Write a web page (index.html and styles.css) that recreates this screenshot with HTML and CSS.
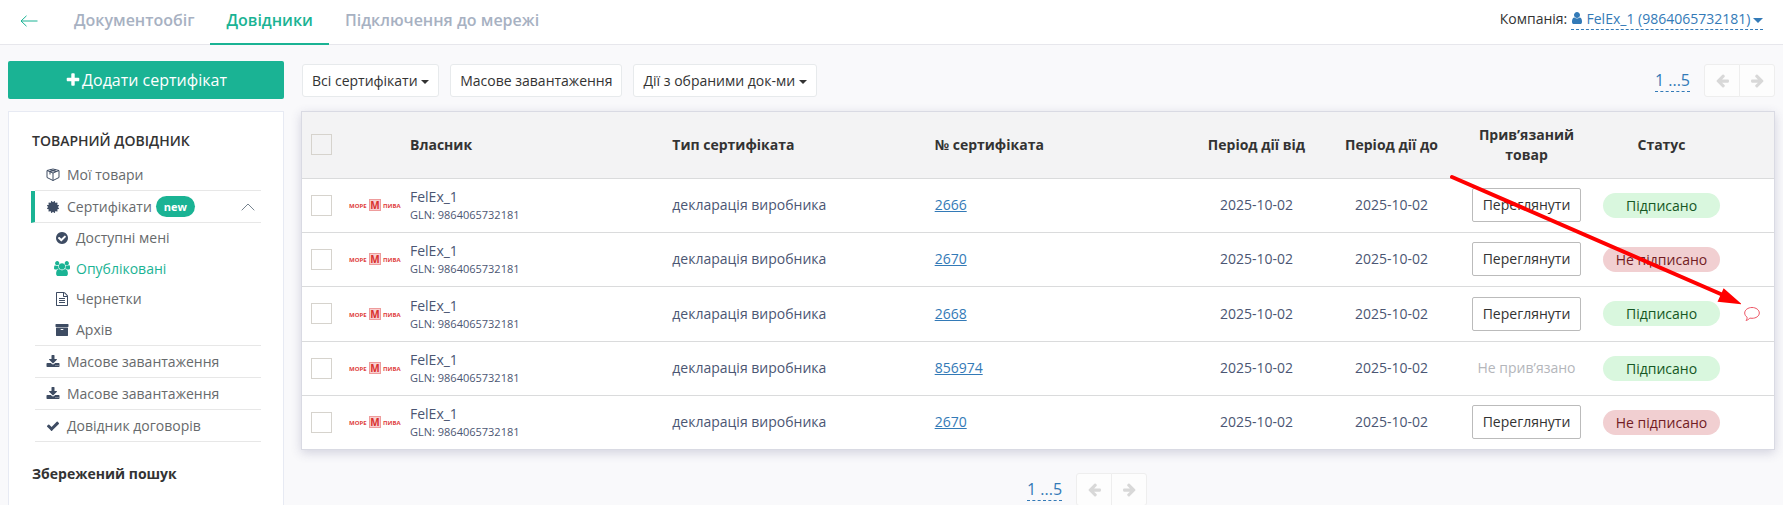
FILE: index.html
```html
<!DOCTYPE html>
<html lang="uk">
<head>
<meta charset="utf-8">
<title>Довідники — сертифікати</title>
<link rel="stylesheet" href="styles.css">
</head>
<body>
<svg class="sprite" aria-hidden="true">
  <symbol id="i-plus" viewBox="0 0 1792 1792"><path d="M1600 736v192q0 40-28 68t-68 28h-416v416q0 40-28 68t-68 28h-192q-40 0-68-28t-28-68v-416h-416q-40 0-68-28t-28-68v-192q0-40 28-68t68-28h416v-416q0-40 28-68t68-28h192q40 0 68 28t28 68v416h416q40 0 68 28t28 68z"/></symbol>
  <symbol id="i-certificate" viewBox="0 0 1792 1792"><path d="M1504 896l138 135q30 28 20 70-12 41-52 51l-188 48 53 186q12 41-19 70-29 31-70 19l-186-53-48 188q-10 40-51 52-12 2-19 2-31 0-51-22l-135-138-135 138q-28 30-70 20-41-11-51-52l-48-188-186 53q-41 12-70-19-31-29-19-70l53-186-188-48q-40-10-52-51-10-42 20-70l138-135-138-135q-30-28-20-70 12-41 52-51l188-48-53-186q-12-41 19-70 29-31 70-19l186 53 48-188q10-41 51-51 41-12 70 19l135 139 135-139q29-30 70-19 41 10 51 51l48 188 186-53q41-12 70 19 31 29 19 70l-53 186 188 48q40 10 52 51 10 42-20 70z"/></symbol>
  <symbol id="i-check-circle" viewBox="0 0 1792 1792"><path d="M1412 734q0-28-18-46l-91-90q-19-19-45-19t-45 19l-408 407-226-226q-19-19-45-19t-45 19l-91 90q-18 18-18 46 0 27 18 45l362 362q19 19 45 19 27 0 46-19l543-543q18-18 18-45zm252 162q0 209-103 385.5t-279.5 279.5-385.5 103-385.5-103-279.5-279.5-103-385.5 103-385.5 279.5-279.5 385.5-103 385.5 103 279.5 279.5 103 385.5z"/></symbol>
  <symbol id="i-group" viewBox="-64 0 1920 1792"><path d="M529 896q-162 5-265 128h-134q-82 0-138-40.500t-56-118.500q0-353 124-353 6 0 43.500 21t97.500 42.500 119 21.500q67 0 133-23-5 37-5 66 0 159 90 287zm1071 637q0 120-73 189.500t-194 69.500h-874q-121 0-194-69.500t-73-189.500q0-53 3.500-103.500t14-109 26.500-108.500 43-97.500 62-81 85.500-53.500 111.500-20q10 0 43 21.500t73 48 107 48 135 21.500 135-21.500 107-48 73-48 43-21.500q61 0 111.500 20t85.500 53.500 62 81 43 97.500 26.500 108.500 14 109 3.500 103.500zm-1024-1277q0 106-75 181t-181 75-181-75-75-181 75-181 181-75 181 75 75 181zm704 384q0 159-112.500 271.500t-271.500 112.500-271.500-112.500-112.500-271.500 112.500-271.500 271.500-112.500 271.500 112.500 112.500 271.500zm576 225q0 78-56 118.500t-138 40.500h-134q-103-123-265-128 90-128 90-287 0-29-5-66 66 23 133 23 59 0 119-21.500t97.500-42.500 43.500-21q124 0 124 353zm-128-609q0 106-75 181t-181 75-181-75-75-181 75-181 181-75 181 75 75 181z"/></symbol>
  <symbol id="i-user" viewBox="128 0 1536 1792"><path d="M1536 1399q0 109-62.500 187t-150.500 78h-854q-88 0-150.500-78t-62.500-187q0-85 8.500-160.500t31.500-152 58.500-131 94-89 134.500-34.500q131 128 313 128t313-128q76 0 134.500 34.500t94 89 58.500 131 31.500 152 8.500 160.500zm-256-887q0 159-112.500 271.500t-271.500 112.500-271.500-112.500-112.500-271.500 112.500-271.500 271.500-112.500 271.500 112.500 112.500 271.500z"/></symbol>
  <symbol id="i-download" viewBox="0 0 1792 1792"><path d="M1344 1344q0-26-19-45t-45-19-45 19-19 45 19 45 45 19 45-19 19-45zm256 0q0-26-19-45t-45-19-45 19-19 45 19 45 45 19 45-19 19-45zm128-224v320q0 40-28 68t-68 28h-1472q-40 0-68-28t-28-68v-320q0-40 28-68t68-28h465l135 136q58 56 136 56t136-56l136-136h464q40 0 68 28t28 68zm-325-569q17 41-14 70l-448 448q-18 19-45 19t-45-19l-448-448q-31-29-14-70 17-39 59-39h256v-448q0-26 19-45t45-19h256q26 0 45 19t19 45v448h256q42 0 59 39z"/></symbol>
  <symbol id="i-check" viewBox="0 0 1792 1792"><path d="M1671 566q0 40-28 68l-724 724-136 136q-28 28-68 28t-68-28l-136-136-362-362q-28-28-28-68t28-68l136-136q28-28 68-28t68 28l294 295 656-657q28-28 68-28t68 28l136 136q28 28 28 68z"/></symbol>
  <symbol id="i-archive" viewBox="0 0 1792 1792"><path d="M1088 832q0-26-19-45t-45-19h-256q-26 0-45 19t-19 45 19 45 45 19h256q26 0 45-19t19-45zm576-192v960q0 26-19 45t-45 19h-1408q-26 0-45-19t-19-45v-960q0-26 19-45t45-19h1408q26 0 45 19t19 45zm64-448v256q0 26-19 45t-45 19h-1536q-26 0-45-19t-19-45v-256q0-26 19-45t45-19h1536q26 0 45 19t19 45z"/></symbol>
  <symbol id="i-file" viewBox="0 0 1792 1792"><path d="M1596 380q28 28 48 76t20 88v1152q0 40-28 68t-68 28h-1344q-40 0-68-28t-28-68v-1600q0-40 28-68t68-28h896q40 0 88 20t76 48zm-444-244v376h376q-10-29-22-41l-313-313q-12-12-41-22zm384 1528v-1024h-416q-40 0-68-28t-28-68v-416h-768v1536h1280zm-1024-864q0-14 9-23t23-9h704q14 0 23 9t9 23v64q0 14-9 23t-23 9h-704q-14 0-23-9t-9-23v-64zm736 224q14 0 23 9t9 23v64q0 14-9 23t-23 9h-704q-14 0-23-9t-9-23v-64q0-14 9-23t23-9h704zm0 256q14 0 23 9t9 23v64q0 14-9 23t-23 9h-704q-14 0-23-9t-9-23v-64q0-14 9-23t23-9h704z"/></symbol>
  <symbol id="i-left" viewBox="0 0 1792 1792"><path d="M1664 896v128q0 53-32.500 90.500t-84.500 37.500h-704l293 294q38 36 38 90t-38 90l-75 76q-37 37-90 37-52 0-91-37l-651-652q-37-37-37-90 0-52 37-91l651-650q38-38 91-38 52 0 90 38l75 74q38 38 38 91t-38 91l-293 293h704q52 0 84.500 37.500t32.500 90.500z"/></symbol>
  <symbol id="i-right" viewBox="0 0 1792 1792"><use href="#i-left" width="1792" height="1792" transform="translate(1792 0) scale(-1 1)"/></symbol>
  <symbol id="i-box" viewBox="0 0 14 14"><path fill="none" stroke="currentColor" stroke-width="1" stroke-linejoin="round" d="M1 2.500L7 1L13 2.500V9.500L7 12.500L1 9.500ZM1 2.500L7 5L13 2.500M7 5V12.500M4 1.800L10 3.700M10 1.800L4 3.700V6.500"/></symbol>
  <symbol id="i-bubble" viewBox="0 0 16 16"><path fill="none" stroke="currentColor" stroke-width="1" stroke-linejoin="round" d="M8 1.500C12 1.500 15.300 3.900 15.300 7S12 12.300 8 12.300C7.200 12.300 6.500 12.200 5.800 12.100C4.900 13.200 3.600 14.200 2 14.400C2.900 13.400 3.200 12.300 3.100 11.200C1.600 10.200 .7 8.700 .7 7C.7 3.900 4 1.500 8 1.500Z"/></symbol>
  <symbol id="i-logo" viewBox="0 0 52 12">
    <rect x="20.500" y=".5" width="11" height="11" fill="#f9cfcf" stroke="#ee9c9c"/>
    <text class="logo-side" x="0" y="8.500">МОРЕ</text>
    <text class="logo-mid" x="26" y="10">М</text>
    <text class="logo-side" x="34" y="8.500">ПИВА</text>
  </symbol>
</svg>

<header class="topbar">
  <a class="back" href="#" aria-label="Назад"><svg viewBox="0 0 18 12"><path d="M6.500 .8L1 6L6.500 11.200M1 6H17.500"/></svg></a>
  <nav class="tabs">
    <a href="#">Документообіг</a>
    <a href="#" class="active">Довідники</a>
    <a href="#">Підключення до мережі</a>
  </nav>
  <div class="company">Компанія: <a href="#"><svg class="user"><use href="#i-user"/></svg> FelEx_1 (9864065732181) <span class="caret"></span></a></div>
</header>

<div class="layout">
  <aside class="side">
    <button class="add" type="button"><svg class="icon"><use href="#i-plus"/></svg>Додати сертифікат</button>
    <div class="panel">
      <h2>ТОВАРНИЙ ДОВІДНИК</h2>
      <ul class="menu">
        <li><a href="#"><svg class="icon"><use href="#i-box"/></svg>Мої товари</a></li>
        <li class="open"><a href="#"><svg class="icon"><use href="#i-certificate"/></svg>Сертифікати<span class="new">new</span><svg class="chevron" viewBox="0 0 14 8"><path d="M.7 7.300L7 1L13.300 7.300"/></svg></a></li>
        <li class="sub">
          <ul>
            <li><a href="#"><svg class="icon"><use href="#i-check-circle"/></svg>Доступні мені</a></li>
            <li><a href="#" class="current"><svg class="icon"><use href="#i-group"/></svg>Опубліковані</a></li>
            <li><a href="#"><svg class="icon"><use href="#i-file"/></svg>Чернетки</a></li>
            <li><a href="#"><svg class="icon"><use href="#i-archive"/></svg>Архів</a></li>
          </ul>
        </li>
        <li><a href="#"><svg class="icon"><use href="#i-download"/></svg>Масове завантаження</a></li>
        <li><a href="#"><svg class="icon"><use href="#i-download"/></svg>Масове завантаження</a></li>
        <li><a href="#"><svg class="icon"><use href="#i-check"/></svg>Довідник договорів</a></li>
      </ul>
      <h3>Збережений пошук</h3>
    </div>
  </aside>

  <main class="main">
    <div class="toolbar">
      <button type="button" class="btn">Всі сертифікати <span class="caret"></span></button>
      <button type="button" class="btn">Масове завантаження</button>
      <button type="button" class="btn">Дії з обраними док-ми <span class="caret"></span></button>
      <div class="pager end">
        <a href="#">1 ...5</a>
        <div class="group"><button type="button" disabled aria-label="Попередня"><svg class="icon"><use href="#i-left"/></svg></button><button type="button" disabled aria-label="Наступна"><svg class="icon"><use href="#i-right"/></svg></button></div>
      </div>
    </div>

    <div class="card">
      <table>
        <colgroup><col class="c-check"><col class="c-logo"><col><col><col><col class="c-mid"><col class="c-mid"><col class="c-mid"><col class="c-mid"><col class="c-note"></colgroup>
        <thead>
          <tr><th class="tick"><input type="checkbox" aria-label="Обрати всі"></th><th></th><th>Власник</th><th>Тип сертифіката</th><th>№ сертифіката</th><th class="mid">Період дії від</th><th class="mid">Період дії до</th><th class="mid">Прив’язаний товар</th><th class="mid">Статус</th><th></th></tr>
        </thead>
        <tbody>
          <tr><td class="tick"><input type="checkbox" aria-label="Обрати 2666"></td><td class="tick"><svg class="logo"><use href="#i-logo"/></svg></td><td>FelEx_1<small>GLN: 9864065732181</small></td><td>декларація виробника</td><td><a href="#">2666</a></td><td class="mid">2025-10-02</td><td class="mid">2025-10-02</td><td class="mid"><button type="button" class="view">Переглянути</button></td><td class="mid"><span class="pill ok">Підписано</span></td><td></td></tr>
          <tr><td class="tick"><input type="checkbox" aria-label="Обрати 2670"></td><td class="tick"><svg class="logo"><use href="#i-logo"/></svg></td><td>FelEx_1<small>GLN: 9864065732181</small></td><td>декларація виробника</td><td><a href="#">2670</a></td><td class="mid">2025-10-02</td><td class="mid">2025-10-02</td><td class="mid"><button type="button" class="view">Переглянути</button></td><td class="mid"><span class="pill no">Не підписано</span></td><td></td></tr>
          <tr><td class="tick"><input type="checkbox" aria-label="Обрати 2668"></td><td class="tick"><svg class="logo"><use href="#i-logo"/></svg></td><td>FelEx_1<small>GLN: 9864065732181</small></td><td>декларація виробника</td><td><a href="#">2668</a></td><td class="mid">2025-10-02</td><td class="mid">2025-10-02</td><td class="mid"><button type="button" class="view">Переглянути</button></td><td class="mid"><span class="pill ok">Підписано</span></td><td class="mid"><svg class="bubble"><use href="#i-bubble"/></svg></td></tr>
          <tr><td class="tick"><input type="checkbox" aria-label="Обрати 856974"></td><td class="tick"><svg class="logo"><use href="#i-logo"/></svg></td><td>FelEx_1<small>GLN: 9864065732181</small></td><td>декларація виробника</td><td><a href="#">856974</a></td><td class="mid">2025-10-02</td><td class="mid">2025-10-02</td><td class="mid none">Не прив’язано</td><td class="mid"><span class="pill ok">Підписано</span></td><td></td></tr>
          <tr><td class="tick"><input type="checkbox" aria-label="Обрати 2670, другий"></td><td class="tick"><svg class="logo"><use href="#i-logo"/></svg></td><td>FelEx_1<small>GLN: 9864065732181</small></td><td>декларація виробника</td><td><a href="#">2670</a></td><td class="mid">2025-10-02</td><td class="mid">2025-10-02</td><td class="mid"><button type="button" class="view">Переглянути</button></td><td class="mid"><span class="pill no">Не підписано</span></td><td></td></tr>
        </tbody>
      </table>
      <svg class="pointer" viewBox="0 0 292 132" aria-hidden="true"><path class="shaft" d="M3 3L274 121"/><path class="head" d="M290 129L270 127L275 116Z"/></svg>
    </div>

    <div class="pager center">
      <a href="#">1 ...5</a>
      <div class="group"><button type="button" disabled aria-label="Попередня"><svg class="icon"><use href="#i-left"/></svg></button><button type="button" disabled aria-label="Наступна"><svg class="icon"><use href="#i-right"/></svg></button></div>
    </div>
  </main>
</div>
</body>
</html>
```

FILE: styles.css
```css
* { box-sizing: border-box; }
html { height: 100%; }
body {
  margin: 0;
  height: 100%;
  overflow: hidden;
  display: flex;
  flex-direction: column;
  background: #f9f9fb;
  color: #333;
  font: 14px/20px "Open Sans", "Noto Sans", sans-serif;
}
a { color: #337ab7; text-decoration: none; }
button { font: inherit; color: inherit; cursor: pointer; }
ul { list-style: none; margin: 0; padding: 0; }
.sprite { display: none; }
.icon { width: 14px; height: 14px; flex: none; fill: currentColor; }
.caret {
  display: inline-block;
  vertical-align: middle;
  border: 4px solid transparent;
  border-top-color: currentColor;
  border-bottom: 0;
}

.topbar {
  display: flex;
  flex: none;
  height: 45px;
  background: #fff;
  border-bottom: 1px solid #e7e7ec;
  padding: 0 20px;
}
.back { display: flex; align-items: center; width: 38px; padding-bottom: 3px; }
.back svg { width: 18px; height: 12px; fill: none; stroke: #1ab394; }
.tabs { display: flex; }
.tabs a {
  height: 45px;
  padding: 8px 16px 0;
  border-bottom: 2px solid transparent;
  color: #a7b1c2;
  font-size: 16px;
  line-height: 24px;
  font-weight: 600;
}
.tabs .active { color: #1ab394; border-color: #1ab394; }
.company { margin-left: auto; padding-top: 9px; }
.company a { display: inline-block; border-bottom: 1px dashed #337ab7; }
.user { width: 12px; height: 14px; fill: currentColor; vertical-align: -1px; }
.company .caret { border-width: 5px 5px 0; margin-left: -1px; }

.layout { display: flex; gap: 17px; padding: 16px 8px 0; flex: 1; min-height: 0; }
.side { width: 276px; flex: none; display: flex; flex-direction: column; gap: 12px; }
.add {
  display: flex;
  flex: none;
  justify-content: center;
  align-items: center;
  gap: 1px;
  height: 38px;
  border: 0;
  border-radius: 2px;
  background: #1ab394;
  color: #fff;
  font-size: 16px;
}
.add .icon { width: 16px; height: 16px; }
.panel { flex: 1; background: #fff; border: 1px solid #e7eaf3; border-bottom: 0; padding: 19px 22px 0 23px; }
.panel h2, .panel h3 { margin: 0; font-size: 14px; line-height: 20px; }
.panel h2 { font-weight: 600; }
.panel h3 { margin-top: 22px; font-weight: 700; }

.menu { padding: 8px 0 0 3px; color: #676a6c; }
.menu > li { border-bottom: 1px solid #e7e7e7; }
.menu a { display: flex; align-items: center; height: 31px; padding: 0 6px 0 11px; gap: 7px; color: #676a6c; }
.menu .icon { color: #3e4c63; }
.menu .open { border-left: 4px solid #1ab394; margin-left: -4px; }
.new {
  margin-left: -3px;
  padding: 0 8px;
  border-radius: 11px;
  background: #1ab394;
  color: #fff;
  font-size: 11px;
  line-height: 21px;
  font-weight: 700;
}
.chevron { width: 14px; height: 8px; margin-left: auto; fill: none; stroke: #76838f; }
.sub ul { display: flex; flex-direction: column; justify-content: space-between; height: 122px; }
.sub a { height: 30px; padding-left: 20px; }
.menu .current, .menu .current .icon { color: #1ab394; }
.current .icon { width: 16px; height: 15px; margin: 0 -1px; }

.main { flex: 1; min-width: 0; }
.toolbar { display: flex; gap: 11px; padding: 3px 0 14px 1px; }
.btn { height: 33px; padding: 0 9px; background: #fff; border: 1px solid #e7eaec; border-radius: 3px; }
.pager { display: flex; gap: 14px; }
.pager a { align-self: center; font-size: 16px; line-height: 22px; border-bottom: 1px dashed #337ab7; }
.end { margin-left: auto; }
.center { justify-content: center; padding: 23px 0 0 98px; }
.group { display: flex; }
.group button {
  display: flex;
  align-items: center;
  justify-content: center;
  width: 36px;
  height: 33px;
  padding: 0;
  border: 1px solid #eee;
  background: #fdfdfd;
  color: #d8d8d8;
}
.group .icon { width: 15px; height: 15px; }
.group button + button { margin-left: -1px; border-radius: 0 3px 3px 0; }
.group button:first-child { border-radius: 3px 0 0 3px; }

.card { position: relative; background: #fff; border: 1px solid #d9dae3; box-shadow: 0 3px 10px rgba(60, 60, 110, .2); }
table { width: 100%; table-layout: fixed; border-collapse: collapse; }
.c-check { width: 38px; }
.c-logo { width: 62px; }
.c-mid { width: 135px; }
.c-note { width: 45px; }
th, td { padding: 0 8px; text-align: left; border-bottom: 1px solid #dadbdc; }
th { height: 66px; background: #f3f3f4; font-weight: 700; }
td { height: 54px; color: #4b5673; }
tbody tr:nth-child(3) td { height: 55px; }
tbody tr:last-child td { border-bottom: 0; }
td small { display: block; font-size: 11px; line-height: 16px; }
td a { text-decoration: underline; }
.mid { text-align: center; }
.tick { padding: 0 0 0 9px; }
input[type="checkbox"] {
  appearance: none;
  display: block;
  width: 21px;
  height: 21px;
  margin: 0;
  border: 1px solid #d6d3cd;
  background: transparent;
}
.logo { display: block; width: 52px; height: 12px; }
.logo-side { font: 700 6px "Open Sans", sans-serif; fill: #e0403c; }
.logo-mid { font: 700 10px "Open Sans", sans-serif; fill: #d8322e; text-anchor: middle; }
.view { height: 34px; width: 109px; padding: 0; background: #fff; border: 1px solid #bbb; border-radius: 2px; color: #333; }
.none { color: #b4b6bb; }
.pill { display: block; border-radius: 13px; line-height: 25px; }
.mid:has(.pill) { padding: 0 9px; }
.ok { background: #d9f7de; color: #155724; }
.no { background: #f1cfd1; color: #721c24; }
.bubble { display: block; width: 16px; height: 16px; margin: 0 auto; color: #ed5565; }
td:last-child { padding: 0; }

/* Annotation arrow that points at the comment icon */
.pointer { position: absolute; top: 62px; right: 33px; width: 292px; height: 132px; pointer-events: none; }
.shaft { stroke: #f00; stroke-width: 4; stroke-linecap: round; }
.head { fill: #f00; stroke: #f00; stroke-width: 2; }
```
